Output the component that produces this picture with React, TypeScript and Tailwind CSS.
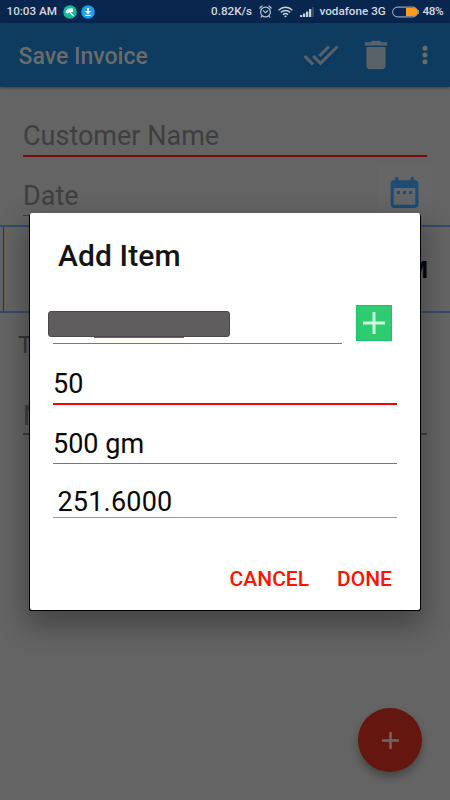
import React from 'react';

const StatusBar: React.FC = () => (
  <div className="h-[23px] bg-[#08264e] flex items-center pl-[6.5px] pr-[6.5px] text-[#d3d9e1] text-[11.7px] font-medium whitespace-nowrap">
    <span className="w-[56px]">10:03 AM</span>
    <svg className="w-[14px] h-[14px] shrink-0" viewBox="0 0 14 14">
      <circle cx="7" cy="7" r="6.8" fill="#12bd9b" />
      <path d="M2.8 7.6C2.9 4.6 5.6 2.9 9.6 3.4c.8 1.3.8 2.5.3 3.7L6.6 6.8 4.5 8.8z" fill="#fff" />
      <path d="M6.8 7l3.4 3.6" stroke="#fff" strokeWidth="1.2" strokeLinecap="round" />
    </svg>
    <svg className="w-[14px] h-[14px] ml-[4.5px] shrink-0" viewBox="0 0 14 14">
      <circle cx="7" cy="7" r="6.8" fill="#1ba1f0" />
      <path d="M6 3h2v3h2L7 9 4 6h2zM4 9.8h6V11H4z" fill="#fff" />
    </svg>
    <span className="ml-auto w-[48px]">0.82K/s</span>
    <svg className="w-[13px] h-[13px] shrink-0" viewBox="0 0 13 13" fill="none" stroke="#b9c2cf" strokeWidth="1.2" strokeLinecap="round">
      <circle cx="6.5" cy="7" r="4.9" />
      <path d="M.8 3L3 1M12.2 3L10 1M4.3 5.8l2.2 1.9 2.2-1.9M3 11.2l-.9 1M10 11.2l.9 1" />
    </svg>
    <svg className="w-[15px] h-[12px] ml-[6px] shrink-0" viewBox="0 0 15 12" fill="none" stroke="#c9d0da" strokeWidth="1.4">
      <path d="M.6 4.2C4.6.3 10.4.3 14.4 4.2M2.8 6.5c2.7-2.6 6.7-2.6 9.4 0M5 8.7c1.5-1.4 3.5-1.4 5 0" />
      <path d="M6 10l1.5 1.5L9 10C8.2 9.2 6.8 9.2 6 10z" fill="#c9d0da" stroke="none" />
    </svg>
    <svg className="w-[14px] h-[10px] ml-[7px] shrink-0" viewBox="0 0 14 10">
      <path d="M0 8h2.3v2H0zM3 6.5h2.3V10H3zM6 4.5h2.3V10H6zM9 2h2.3v8H9z" fill="#c9d0da" />
      <path d="M12 0h2v10h-2z" fill="#2f496b" />
    </svg>
    <span className="ml-[5.5px] w-[72px]">vodafone 3G</span>
    <svg className="w-[27px] h-[12px] shrink-0" viewBox="0 0 27 12">
      <rect x=".6" y="1.1" width="25" height="9.8" rx="4.9" fill="none" stroke="#8f9db0" strokeWidth="1.1" />
      <path d="M14 2h7.5a4 4 0 0 1 0 8H14z" fill="#ff9c1c" />
      <path d="M26.4 4v4" stroke="#8f9db0" strokeWidth="1.1" />
    </svg>
    <span className="ml-[4px] w-[21px] tracking-[-0.4px]">48%</span>
  </div>
);

const AppBar: React.FC = () => (
  <header className="h-[64px] bg-[#0d3c60] flex items-center pl-[18.5px] pr-[22.5px] shadow-[0_1px_3px_rgba(0,0,0,0.4)] relative">
    <h1 className="text-[23px] leading-[30px] font-medium text-[#6b6b6b] pt-[3px] mr-auto">Save Invoice</h1>
    <svg className="w-[36px] h-[36px]" viewBox="0 0 24 24" fill="#596269">
      <path d="M18 7l-1.41-1.41-6.34 6.34 1.41 1.41L18 7zm4.24-1.41L11.66 16.17 7.48 12l-1.41 1.41L11.66 19l12-12-1.42-1.41zM.41 13.41L6 19l1.41-1.41L1.83 12 .41 13.41z" />
    </svg>
    <svg className="w-[38px] h-[38px] ml-[18px]" viewBox="0 0 24 24" fill="#596269">
      <path d="M6 19c0 1.1.9 2 2 2h8c1.1 0 2-.9 2-2V7H6v12zM19 4h-3.5l-1-1h-5l-1 1H5v2h14V4z" />
    </svg>
    <svg className="w-[6px] h-[20px] ml-[27px]" viewBox="0 0 6 20" fill="#6b6b6b">
      <circle cx="3" cy="3.3" r="2.5" />
      <circle cx="3" cy="10" r="2.5" />
      <circle cx="3" cy="16.7" r="2.5" />
    </svg>
  </header>
);

const InvoiceForm: React.FC = () => (
  <main className="text-[27px] text-[#3f3f3f]">
    <div className="mt-[30px] mx-[23px] h-[40px] border-b-2 border-[#7a0b06] leading-[39px]">Customer Name</div>
    <div className="mt-[8px] flex h-[51px]">
      <div className="ml-[23px] mt-[12px] h-[39px] flex-1 border-b border-[#3f3f3f] leading-[39px]">Date</div>
      <div className="w-[55px] bg-[#666666] mr-[18px] pt-[9px] pl-[8.5px]">
        <svg className="w-[37px] h-[37px]" viewBox="0 0 24 24" fill="#1f4c73">
          <path d="M9 11H7v2h2v-2zm4 0h-2v2h2v-2zm4 0h-2v2h2v-2zm2-7h-1V2h-2v2H8V2H6v2H5c-1.11 0-1.99.9-1.99 2L3 20c0 1.1.89 2 2 2h14c1.1 0 2-.9 2-2V6c0-1.1-.9-2-2-2zm0 16H5V9h14v11z" />
        </svg>
      </div>
    </div>
    <div className="mt-[9px] h-[88px] border-y-2 border-[#304b70] pl-[3px]">
      <div className="h-full border-l border-[#0d3c60] pr-[22px] text-right text-[24px] leading-[86px] font-bold text-[#080808]">M</div>
    </div>
    <div className="mt-[16px] h-[32px] pl-[18px] text-[24px] leading-[32px] text-[#353535]">T</div>
    <div className="mt-[35px] mx-[23px] h-[39px] border-b-2 border-[#3f3f3f] leading-[40px]">N</div>
  </main>
);

const AddItemDialog: React.FC = () => (
  <div className="absolute left-[30px] top-[213px] w-[390px] h-[397px] bg-white rounded-[2px] px-[23px] text-[27px] text-[#080808] shadow-[1px_1px_0_#000,-1px_1px_0_#000,0_12px_28px_4px_rgba(0,0,0,0.32)]">
    <h2 className="pt-[24px] pl-[5px] text-[30px] leading-[38px] font-medium tracking-[0.1px] text-[#141414]">Add Item</h2>
    <div className="flex justify-between pr-[5px] mt-[29px]">
      <div className="w-[289px] h-[40px] border-b border-[#777777] pt-[7px]">
        <div className="-ml-[5px] w-[182px] h-[26px] rounded-[3px] bg-[#5f5d5e] border border-[#4a4849]" />
        <div className="ml-[41px] w-[90px] h-px bg-[#d93232]" />
      </div>
      <div className="w-[36px] h-[36px] mt-[1px] bg-[#2ecc71] border border-[#15c963] flex items-center justify-center">
        <svg className="w-[22px] h-[22px]" viewBox="0 0 22 22" stroke="#d3f6e1" strokeWidth="3">
          <path d="M11 0v22M0 11h22" />
        </svg>
      </div>
    </div>
    <div className="mt-[21px] h-[40px] border-b-2 border-[#ff0000] leading-[38px]">50</div>
    <div className="mt-[19px] h-[40px] border-b border-[#777777] leading-[41px]">500 gm</div>
    <div className="mt-[18px] h-[36px] border-b border-[#999999] pl-[4.5px] leading-[40px] tracking-[0.2px]">251.6000</div>
    <div className="mt-[47px] flex justify-end gap-[28px] pr-[5px] text-[21px] leading-[28px] font-medium text-[#ff1200]">
      <button>CANCEL</button>
      <button>DONE</button>
    </div>
  </div>
);

const App: React.FC = () => (
  <div className="relative w-[450px] h-[800px] overflow-hidden bg-[#646464] font-[Roboto,sans-serif]">
    <StatusBar />
    <AppBar />
    <InvoiceForm />
    <button className="absolute left-[358px] top-[708px] w-[64px] h-[64px] rounded-full bg-[#64160f] flex items-center justify-center shadow-[0_5px_9px_rgba(0,0,0,0.3)]">
      <svg className="w-[17px] h-[17px]" viewBox="0 0 17 17" stroke="#736562" strokeWidth="2.5">
        <path d="M8.5 0v17M0 8.5h17" />
      </svg>
    </button>
    <AddItemDialog />
  </div>
);

export default App;
